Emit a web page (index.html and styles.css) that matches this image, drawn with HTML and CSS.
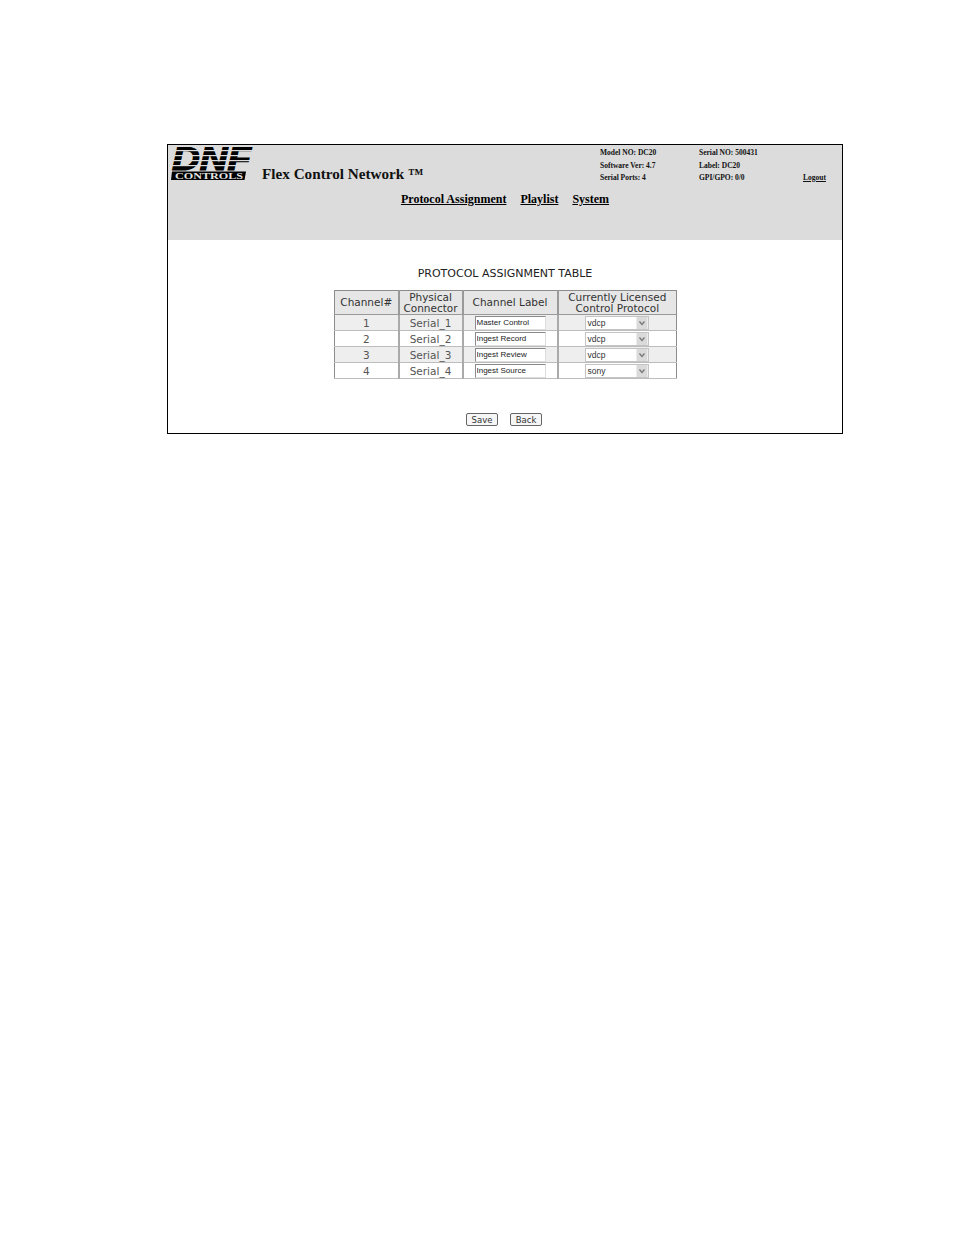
FILE: index.html
```html
<!DOCTYPE html>
<html lang="en">
<head>
<meta charset="utf-8">
<title>Protocol Assignment</title>
<link rel="stylesheet" href="styles.css">
</head>
<body>
<div class="frame">
  <header class="head">
    <div class="top">
      <svg class="logo" width="84" height="34" viewBox="0 0 84 34">
        <text x="1" y="23" class="logo-letters" textLength="79" lengthAdjust="spacingAndGlyphs">DNF</text>
        <g class="logo-stripes">
          <rect x="0" y="3" width="84" height="1.2"/>
          <rect x="0" y="8" width="84" height="1.2"/>
          <rect x="0" y="13" width="84" height="1.2"/>
          <rect x="0" y="18" width="84" height="1.2"/>
        </g>
        <polygon class="logo-bar" points="1,24.5 75,24.5 73.5,33 0,33"/>
        <text x="4" y="31.5" class="logo-small" textLength="68" lengthAdjust="spacingAndGlyphs">CONTROLS</text>
      </svg>
      <div class="brand">Flex Control Network ™</div>
      <div class="info">
        <span>Model NO: DC20</span><span>Serial NO: 500431</span><span></span>
        <span>Software Ver: 4.7</span><span>Label: DC20</span><span></span>
        <span>Serial Ports: 4</span><span>GPI/GPO: 0/0</span><a href="#">Logout</a>
      </div>
    </div>
    <nav class="nav">
      <a href="#">Protocol Assignment</a>
      <a href="#">Playlist</a>
      <a href="#">System</a>
    </nav>
  </header>
  <main class="body">
    <h1 class="table-title">PROTOCOL ASSIGNMENT TABLE</h1>
    <table class="assign">
      <colgroup><col class="c1"><col class="c2"><col class="c3"><col class="c4"></colgroup>
      <thead>
        <tr><th>Channel#</th><th>Physical<br>Connector</th><th>Channel Label</th><th>Currently Licensed<br>Control Protocol</th></tr>
      </thead>
      <tbody>
        <tr class="odd"><td>1</td><td>Serial_1</td><td class="left"><input class="label" value="Master Control"></td><td><div class="sel"><span>vdcp</span><svg class="arrow" viewBox="0 0 11 12"><rect width="11" height="12" fill="#dadada"/><path d="M3 4.5 5.5 7.5 8 4.5" fill="none" stroke="#777" stroke-width="1.3"/></svg></div></td></tr>
        <tr><td>2</td><td>Serial_2</td><td class="left"><input class="label" value="Ingest Record"></td><td><div class="sel"><span>vdcp</span><svg class="arrow" viewBox="0 0 11 12"><rect width="11" height="12" fill="#dadada"/><path d="M3 4.5 5.5 7.5 8 4.5" fill="none" stroke="#777" stroke-width="1.3"/></svg></div></td></tr>
        <tr class="odd"><td>3</td><td>Serial_3</td><td class="left"><input class="label" value="Ingest Review"></td><td><div class="sel"><span>vdcp</span><svg class="arrow" viewBox="0 0 11 12"><rect width="11" height="12" fill="#dadada"/><path d="M3 4.5 5.5 7.5 8 4.5" fill="none" stroke="#777" stroke-width="1.3"/></svg></div></td></tr>
        <tr><td>4</td><td>Serial_4</td><td class="left"><input class="label" value="Ingest Source"></td><td><div class="sel"><span>sony</span><svg class="arrow" viewBox="0 0 11 12"><rect width="11" height="12" fill="#dadada"/><path d="M3 4.5 5.5 7.5 8 4.5" fill="none" stroke="#777" stroke-width="1.3"/></svg></div></td></tr>
      </tbody>
    </table>
    <div class="actions">
      <button class="btn" type="button">Save</button>
      <button class="btn" type="button">Back</button>
    </div>
  </main>
</div>
</body>
</html>
```
FILE: styles.css
```css
html, body { margin: 0; padding: 0; background: #fff; }
body { height: 1235px; overflow: hidden; padding-top: 144px; box-sizing: border-box; }
.frame {
  width: 676px; height: 290px; margin-left: 167px;
  box-sizing: border-box; border: 1px solid #000;
  color: #000; background: #fff;
}
.head { height: 95px; background: #dcdcdc; font-family: "Liberation Serif", serif; box-sizing: border-box; padding-top: 2px; }
.top { display: flex; height: 36px; }
.logo { display: block; margin-left: 3px; flex: none; }
.logo-letters { font: italic 900 33px "Liberation Sans", sans-serif; fill: #000; stroke: #000; stroke-width: 1.2px; }
.logo-stripes { fill: #dcdcdc; }
.logo-bar { fill: #000; }
.logo-small { font: bold 8.5px "Liberation Serif", serif; fill: #e4e4e4; }
.brand { margin-left: 7px; margin-top: 18px; font-size: 15.2px; font-weight: bold; line-height: 18px; white-space: nowrap; flex: none; width: 338px; color: #111; }
.info {
  display: grid; grid-template-columns: 99px 104px auto; grid-auto-rows: 12.5px;
  font-size: 7.5px; font-weight: bold; line-height: 12.5px; white-space: nowrap; color: #111;
}
.info a { color: #111; }
.nav { display: flex; justify-content: center; gap: 14px; margin-top: 9px; font-size: 12px; font-weight: bold; line-height: 15px; }
.nav a { color: #000; }
.body { font-family: "DejaVu Sans", sans-serif; color: #222; }
.table-title { margin: 27px 0 0; height: 23px; text-align: center; font-size: 11px; font-weight: normal; line-height: 14px; color: #222; }
.assign { margin: 0 0 0 166px; width: 342px; table-layout: fixed; border-collapse: collapse; font-size: 10.5px; border: 1px solid #8c8c8c; }
.c1 { width: 64px; } .c2 { width: 64px; } .c3 { width: 95px; } .c4 { width: 119px; }
.assign th { height: 23px; padding: 0; font-weight: normal; line-height: 11px; color: #333; background: #e6e6e6; border: 1px solid #999; border-width: 0 2px 1px 0; }
.assign th:last-child { border-right: 0; }
.assign td { height: 15px; padding: 0; text-align: center; line-height: 14px; border-bottom: 1px solid #bdbdbd; border-right: 2px solid #aaa; background: #fff; color: #555; }
.assign td:last-child { border-right: 0; }
.assign .odd td { background: #eeeeee; }
.left { text-align: left; }
.label {
  display: block; width: 71px; height: 14px; margin-left: 11px; padding: 0 0 0 1px; box-sizing: border-box;
  font: 8px "Liberation Sans", sans-serif; color: #222; background: #fff;
  border: 1px solid; border-color: #8a8a8a #ddd #ddd #8a8a8a; outline: 0;
}
.sel {
  display: flex; justify-content: space-between; align-items: center;
  width: 64px; height: 14px; margin-left: 26px; box-sizing: border-box; padding: 0 0 0 2px;
  background: #fff; border: 1px solid #c4c4c4; font: 8.5px "Liberation Sans", sans-serif; color: #333;
}
.arrow { width: 12px; height: 12px; display: block; }
.actions { display: flex; justify-content: center; gap: 12px; margin-top: 34px; padding-right: 2px; }
.btn {
  width: 32px; height: 13px; padding: 0; box-sizing: border-box;
  font: 8.5px "DejaVu Sans", sans-serif; color: #333; background: #f6f6f6;
  border: 1px solid #666; border-radius: 2px;
}
```
